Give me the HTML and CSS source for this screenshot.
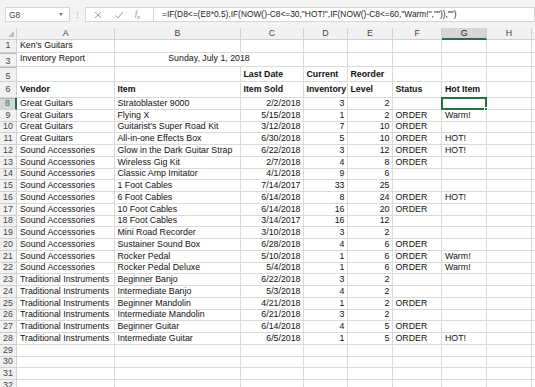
FILE: index.html
```html
<!DOCTYPE html>
<html>
<head>
<meta charset="utf-8">
<link rel="stylesheet" href="styles.css">
</head>
<body>
<div class="app">
  <div class="toolbar">
    <div class="namebox"><span class="ref">G8</span><span class="caret"></span></div>
    <div class="dots"><i></i><i></i><i></i></div>
    <div class="fxbox">
      <svg class="ico" width="10" height="10" viewBox="0 0 10 10"><path d="M2 2L8 8M8 2L2 8" stroke="#a0a0a0" stroke-width="1" fill="none"/></svg>
      <svg class="ico" width="10" height="10" viewBox="0 0 10 10"><path d="M1.5 5.5L4 8L8.8 2" stroke="#a0a0a0" stroke-width="1" fill="none"/></svg>
      <span class="fx">f<sub>x</sub></span>
    </div>
    <div class="formula">=IF(D8&lt;=(E8*0.5),IF(NOW()-C8&lt;=30,"HOT!",IF(NOW()-C8&lt;=60,"Warm!","")),"")</div>
  </div>
  <div class="sheet">
    <div class="row hdr">
      <div class="corner"><span class="tri"></span></div>
      <div class="ch">A</div><div class="ch">B</div><div class="ch">C</div><div class="ch">D</div><div class="ch">E</div><div class="ch">F</div><div class="ch sel">G</div><div class="ch">H</div><div class="ch"></div>
    </div>
    <div class="row r1">
      <div class="rh">1</div><div class="c">Ken's Guitars</div><div class="c"></div><div class="c"></div><div class="c"></div><div class="c"></div><div class="c"></div><div class="c"></div><div class="c"></div><div class="c"></div>
    </div>
    <div class="row r3">
      <div class="rh hid">3</div><div class="c">Inventory Report</div><div class="c span2 ctr">Sunday, July 1, 2018</div><div class="c"></div><div class="c"></div><div class="c"></div><div class="c"></div><div class="c"></div><div class="c"></div>
    </div>
    <div class="row r5">
      <div class="rh hid">5</div><div class="c"></div><div class="c"></div><div class="c b">Last Date</div><div class="c b">Current</div><div class="c b">Reorder</div><div class="c"></div><div class="c"></div><div class="c"></div><div class="c"></div>
    </div>
    <div class="row r6">
      <div class="rh">6</div><div class="c b">Vendor</div><div class="c b">Item</div><div class="c b">Item Sold</div><div class="c b">Inventory</div><div class="c b">Level</div><div class="c b">Status</div><div class="c b">Hot Item</div><div class="c"></div><div class="c"></div>
    </div>
    <div class="row"><div class="rh rsel hid">8</div><div class="c">Great Guitars</div><div class="c">Stratoblaster 9000</div><div class="c n">2/2/2018</div><div class="c n">3</div><div class="c n">2</div><div class="c"></div><div class="c active"><span class="handle"></span></div><div class="c"></div><div class="c"></div></div>
    <div class="row"><div class="rh">9</div><div class="c">Great Guitars</div><div class="c">Flying X</div><div class="c n">5/15/2018</div><div class="c n">1</div><div class="c n">2</div><div class="c">ORDER</div><div class="c">Warm!</div><div class="c"></div><div class="c"></div></div>
    <div class="row"><div class="rh">10</div><div class="c">Great Guitars</div><div class="c">Guitarist's Super Road Kit</div><div class="c n">3/12/2018</div><div class="c n">7</div><div class="c n">10</div><div class="c">ORDER</div><div class="c"></div><div class="c"></div><div class="c"></div></div>
    <div class="row"><div class="rh">11</div><div class="c">Great Guitars</div><div class="c">All-in-one Effects Box</div><div class="c n">6/30/2018</div><div class="c n">5</div><div class="c n">10</div><div class="c">ORDER</div><div class="c">HOT!</div><div class="c"></div><div class="c"></div></div>
    <div class="row"><div class="rh">12</div><div class="c">Sound Accessories</div><div class="c">Glow in the Dark Guitar Strap</div><div class="c n">6/22/2018</div><div class="c n">3</div><div class="c n">12</div><div class="c">ORDER</div><div class="c">HOT!</div><div class="c"></div><div class="c"></div></div>
    <div class="row"><div class="rh">13</div><div class="c">Sound Accessories</div><div class="c">Wireless Gig Kit</div><div class="c n">2/7/2018</div><div class="c n">4</div><div class="c n">8</div><div class="c">ORDER</div><div class="c"></div><div class="c"></div><div class="c"></div></div>
    <div class="row"><div class="rh">14</div><div class="c">Sound Accessories</div><div class="c">Classic Amp Imitator</div><div class="c n">4/1/2018</div><div class="c n">9</div><div class="c n">6</div><div class="c"></div><div class="c"></div><div class="c"></div><div class="c"></div></div>
    <div class="row"><div class="rh">15</div><div class="c">Sound Accessories</div><div class="c">1 Foot Cables</div><div class="c n">7/14/2017</div><div class="c n">33</div><div class="c n">25</div><div class="c"></div><div class="c"></div><div class="c"></div><div class="c"></div></div>
    <div class="row"><div class="rh">16</div><div class="c">Sound Accessories</div><div class="c">6 Foot Cables</div><div class="c n">6/14/2018</div><div class="c n">8</div><div class="c n">24</div><div class="c">ORDER</div><div class="c">HOT!</div><div class="c"></div><div class="c"></div></div>
    <div class="row"><div class="rh">17</div><div class="c">Sound Accessories</div><div class="c">10 Foot Cables</div><div class="c n">6/14/2018</div><div class="c n">16</div><div class="c n">20</div><div class="c">ORDER</div><div class="c"></div><div class="c"></div><div class="c"></div></div>
    <div class="row"><div class="rh">18</div><div class="c">Sound Accessories</div><div class="c">18 Foot Cables</div><div class="c n">3/14/2017</div><div class="c n">16</div><div class="c n">12</div><div class="c"></div><div class="c"></div><div class="c"></div><div class="c"></div></div>
    <div class="row"><div class="rh">19</div><div class="c">Sound Accessories</div><div class="c">Mini Road Recorder</div><div class="c n">3/10/2018</div><div class="c n">3</div><div class="c n">2</div><div class="c"></div><div class="c"></div><div class="c"></div><div class="c"></div></div>
    <div class="row"><div class="rh">20</div><div class="c">Sound Accessories</div><div class="c">Sustainer Sound Box</div><div class="c n">6/28/2018</div><div class="c n">4</div><div class="c n">6</div><div class="c">ORDER</div><div class="c"></div><div class="c"></div><div class="c"></div></div>
    <div class="row"><div class="rh">21</div><div class="c">Sound Accessories</div><div class="c">Rocker Pedal</div><div class="c n">5/10/2018</div><div class="c n">1</div><div class="c n">6</div><div class="c">ORDER</div><div class="c">Warm!</div><div class="c"></div><div class="c"></div></div>
    <div class="row"><div class="rh">22</div><div class="c">Sound Accessories</div><div class="c">Rocker Pedal Deluxe</div><div class="c n">5/4/2018</div><div class="c n">1</div><div class="c n">6</div><div class="c">ORDER</div><div class="c">Warm!</div><div class="c"></div><div class="c"></div></div>
    <div class="row"><div class="rh">23</div><div class="c">Traditional Instruments</div><div class="c">Beginner Banjo</div><div class="c n">6/22/2018</div><div class="c n">3</div><div class="c n">2</div><div class="c"></div><div class="c"></div><div class="c"></div><div class="c"></div></div>
    <div class="row"><div class="rh">24</div><div class="c">Traditional Instruments</div><div class="c">Intermediate Banjo</div><div class="c n">5/3/2018</div><div class="c n">4</div><div class="c n">2</div><div class="c"></div><div class="c"></div><div class="c"></div><div class="c"></div></div>
    <div class="row"><div class="rh">25</div><div class="c">Traditional Instruments</div><div class="c">Beginner Mandolin</div><div class="c n">4/21/2018</div><div class="c n">1</div><div class="c n">2</div><div class="c">ORDER</div><div class="c"></div><div class="c"></div><div class="c"></div></div>
    <div class="row"><div class="rh">26</div><div class="c">Traditional Instruments</div><div class="c">Intermediate Mandolin</div><div class="c n">6/21/2018</div><div class="c n">3</div><div class="c n">2</div><div class="c"></div><div class="c"></div><div class="c"></div><div class="c"></div></div>
    <div class="row"><div class="rh">27</div><div class="c">Traditional Instruments</div><div class="c">Beginner Guitar</div><div class="c n">6/14/2018</div><div class="c n">4</div><div class="c n">5</div><div class="c">ORDER</div><div class="c"></div><div class="c"></div><div class="c"></div></div>
    <div class="row"><div class="rh">28</div><div class="c">Traditional Instruments</div><div class="c">Intermediate Guitar</div><div class="c n">6/5/2018</div><div class="c n">1</div><div class="c n">5</div><div class="c">ORDER</div><div class="c">HOT!</div><div class="c"></div><div class="c"></div></div>
    <div class="row"><div class="rh">29</div><div class="c"></div><div class="c"></div><div class="c"></div><div class="c"></div><div class="c"></div><div class="c"></div><div class="c"></div><div class="c"></div><div class="c"></div></div>
    <div class="row"><div class="rh">30</div><div class="c"></div><div class="c"></div><div class="c"></div><div class="c"></div><div class="c"></div><div class="c"></div><div class="c"></div><div class="c"></div><div class="c"></div></div>
    <div class="row"><div class="rh">31</div><div class="c"></div><div class="c"></div><div class="c"></div><div class="c"></div><div class="c"></div><div class="c"></div><div class="c"></div><div class="c"></div><div class="c"></div></div>
    <div class="row"><div class="rh">32</div><div class="c"></div><div class="c"></div><div class="c"></div><div class="c"></div><div class="c"></div><div class="c"></div><div class="c"></div><div class="c"></div><div class="c"></div></div>
  </div>
</div>
</body>
</html>
```
FILE: styles.css
```css
* { box-sizing: border-box; }
html, body { margin: 0; padding: 0; }
body { width: 535px; height: 387px; overflow: hidden; background: #fff; font-family: "Liberation Sans", Arial, sans-serif; }
.app { width: 535px; height: 387px; overflow: hidden; }
.toolbar { height: 28px; background: #f3f3f3; display: flex; align-items: flex-start; padding-top: 7px; }
.namebox { margin-left: 5px; width: 65px; height: 15px; background: #fff; border: 1px solid #d4d4d4; display: flex; align-items: center; justify-content: space-between; padding: 0 6px 0 3px; }
.ref { font-size: 8.4px; color: #444; }
.caret { width: 0; height: 0; border-left: 2.5px solid transparent; border-right: 2.5px solid transparent; border-top: 3px solid #777; }
.dots { width: 15px; height: 15px; display: flex; flex-direction: column; align-items: center; justify-content: center; gap: 1.5px; }
.dots i { width: 1px; height: 1px; background: #aaa; display: block; }
.fxbox { width: 68px; height: 15px; background: #fff; border: 1px solid #d4d4d4; border-right: none; display: flex; align-items: center; padding-left: 7px; gap: 11px; }
.fx { font-family: "Liberation Serif", serif; font-style: italic; font-size: 8px; color: #777; }
.fx sub { font-size: 6px; }
.formula { flex: 1; height: 15px; background: #fff; border: 1px solid #d4d4d4; font-size: 8.4px; color: #222; padding-left: 8px; line-height: 13px; white-space: nowrap; overflow: hidden; }
.row { display: grid; grid-template-columns: 17px 97.5px 126px 63px 44px 45px 49.5px 44.5px 45px 3.5px; height: 11.75px; }
.row > div { border-right: 1px solid #dadada; border-bottom: 1px solid #dadada; font-size: 8.8px; color: #111; white-space: nowrap; overflow: visible; display: flex; align-items: center; padding: 0 2px 0 3px; line-height: 1; }
.hdr { height: 12px; }
.hdr > div { background: #f1f1f1; color: #444; justify-content: center; border-color: #d0d0d0; }
.hdr > .sel { background: #d6d6d6; border-bottom: 2px solid #217346; color: #222; }
.corner { position: relative; }
.tri { position: absolute; right: 2px; bottom: 2px; width: 0; height: 0; border-left: 6px solid transparent; border-bottom: 6px solid #bdbdbd; }
.row > .rh { background: #f1f1f1; color: #444; justify-content: center; padding: 0; border-color: #d0d0d0; }
.row > .hid { box-shadow: inset 0 1px 0 #b8b8b8; }
.row > .rsel { background: #d6d6d6; border-right: 2px solid #217346; color: #217346; }
.r1 { height: 12.5px; }
.r3 { height: 14px; }
.r3 > div { align-items: flex-end; padding-bottom: 3px; }
.r5 { height: 15.5px; }
.r5 > div { align-items: flex-end; padding-bottom: 2.5px; }
.r6 { height: 16px; }
.b { font-weight: bold; }
.n { justify-content: flex-end; }
.span2 { grid-column: span 2; }
.ctr { justify-content: center; }
.row > .active { position: relative; border: 2px solid #217346; margin: -1px 0 0 -1px; width: calc(100% + 1px); height: calc(100% + 1px); }
.handle { position: absolute; right: -3px; bottom: -3px; width: 4px; height: 4px; background: #217346; border: 1px solid #fff; }
```
